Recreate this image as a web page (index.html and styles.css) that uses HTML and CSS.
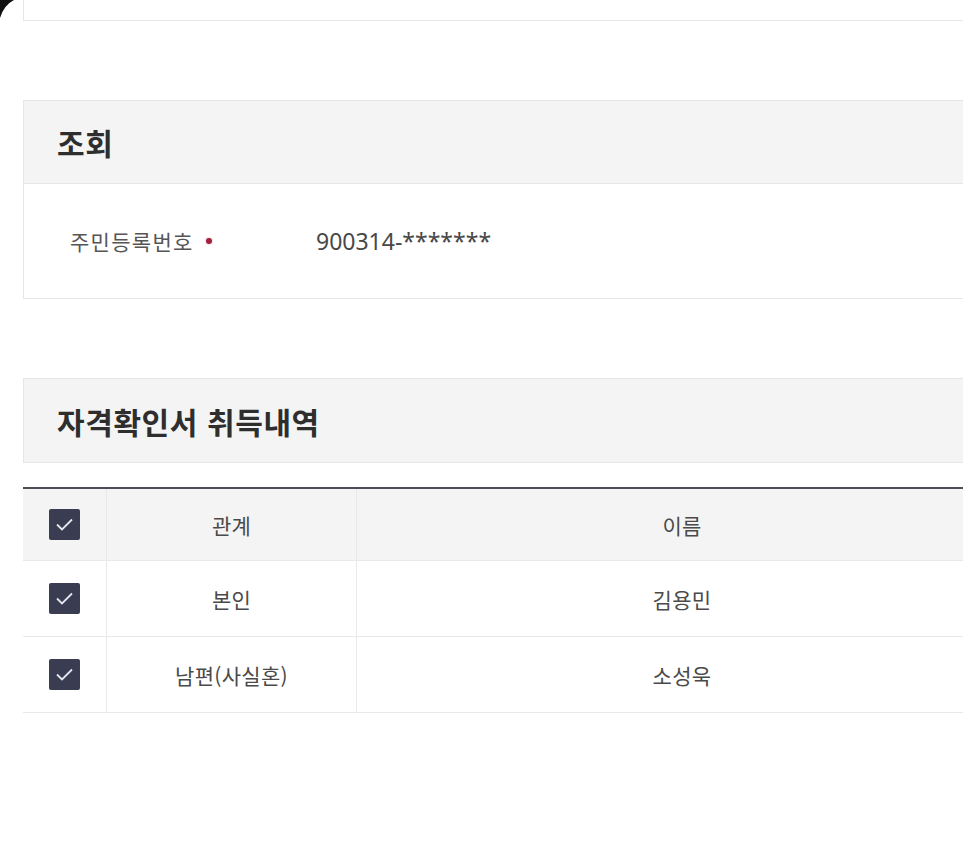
FILE: index.html
```html
<!DOCTYPE html>
<html lang="ko">
<head>
<meta charset="utf-8">
<title>자격확인서 취득내역</title>
<link rel="stylesheet" href="styles.css">
</head>
<body>
<svg class="corner" width="24" height="24" viewBox="0 0 24 24" aria-hidden="true"><path d="M0 0 H14 Q4 5 0 18 Z" fill="#111"/></svg>
<div class="wrap">
  <div class="topbox"></div>

  <section class="panel">
    <div class="panel-head"><h2>조회</h2></div>
    <div class="panel-body">
      <div class="field-label">주민등록번호<span class="req"></span></div>
      <div class="field-value">900314-*******</div>
    </div>
  </section>

  <section class="panel panel-single">
    <div class="panel-head tall"><h2>자격확인서 취득내역</h2></div>
  </section>

  <div class="grid-table">
    <div class="trow thead">
      <div class="cell chk"><span class="cb"><svg viewBox="0 0 31 31" width="31" height="31"><polyline points="8,15.5 13,20.5 23,10.5" fill="none" stroke="#e6e7ee" stroke-width="1.8"/></svg></span></div>
      <div class="cell">관계</div>
      <div class="cell last">이름</div>
    </div>
    <div class="trow">
      <div class="cell chk"><span class="cb"><svg viewBox="0 0 31 31" width="31" height="31"><polyline points="8,15.5 13,20.5 23,10.5" fill="none" stroke="#e6e7ee" stroke-width="1.8"/></svg></span></div>
      <div class="cell">본인</div>
      <div class="cell last">김용민</div>
    </div>
    <div class="trow">
      <div class="cell chk"><span class="cb"><svg viewBox="0 0 31 31" width="31" height="31"><polyline points="8,15.5 13,20.5 23,10.5" fill="none" stroke="#e6e7ee" stroke-width="1.8"/></svg></span></div>
      <div class="cell">남편(사실혼)</div>
      <div class="cell last">소성욱</div>
    </div>
  </div>
</div>
</body>
</html>
```

FILE: styles.css
```css
html, body {
  margin: 0;
  padding: 0;
  background: #fff;
  overflow: hidden;
}
body {
  font-family: "Noto Sans", "Noto Sans CJK KR", sans-serif;
  color: #444;
  width: 963px;
  height: 865px;
  position: relative;
}
.corner {
  position: absolute;
  left: 0;
  top: 0;
}
.wrap {
  width: 984px;
  padding-left: 23px;
}
.topbox {
  height: 20px;
  border: 1px solid #e6e6e6;
  border-top: none;
  background: #fff;
}
.panel {
  margin-top: 79px;
  border: 1px solid #e6e6e6;
  background: #fff;
}
.panel-head {
  height: 82px;
  background: #f4f4f4;
  display: flex;
  align-items: center;
  padding-left: 33px;
}
.panel-head.tall {
  height: 83px;
}
.panel-head h2 {
  margin: 0;
  font-family: "Noto Sans CJK KR", sans-serif;
  font-size: 30px;
  font-weight: 700;
  color: #2e2e2e;
  letter-spacing: 0.6px;
}
.panel-body {
  border-top: 1px solid #e6e6e6;
  height: 114px;
  display: flex;
  align-items: center;
  padding-left: 46px;
}
.field-label {
  width: 246px;
  font-family: "Noto Sans CJK KR", sans-serif;
  font-size: 21px;
  letter-spacing: 1.3px;
  color: #555;
  display: flex;
  align-items: center;
}
.req {
  display: inline-block;
  width: 6px;
  height: 6px;
  border-radius: 50%;
  background: #a3213d;
  box-shadow: 0 0 2px rgba(220, 80, 110, 0.6);
  margin-left: 12px;
}
.field-value {
  font-family: "Noto Sans", sans-serif;
  font-size: 23px;
  color: #484848;
}
.grid-table {
  margin-top: 24px;
  border-top: 2px solid #4d4d56;
}
.trow {
  display: grid;
  grid-template-columns: 84px 250px 650px;
  height: 76px;
  border-bottom: 1px solid #e9e9e9;
  box-sizing: border-box;
}
.trow.thead {
  height: 72px;
  background: #f4f4f4;
}
.cell {
  display: flex;
  align-items: center;
  justify-content: center;
  font-family: "Noto Sans CJK KR", sans-serif;
  font-size: 21px;
  letter-spacing: 0.3px;
  color: #4a4a4a;
  border-right: 1px solid #e9e9e9;
}
.cell.last {
  border-right: none;
}
.cb {
  width: 31px;
  height: 31px;
  border-radius: 2px;
  background: #3a3c51;
  display: block;
}
.cb svg {
  display: block;
}
```
